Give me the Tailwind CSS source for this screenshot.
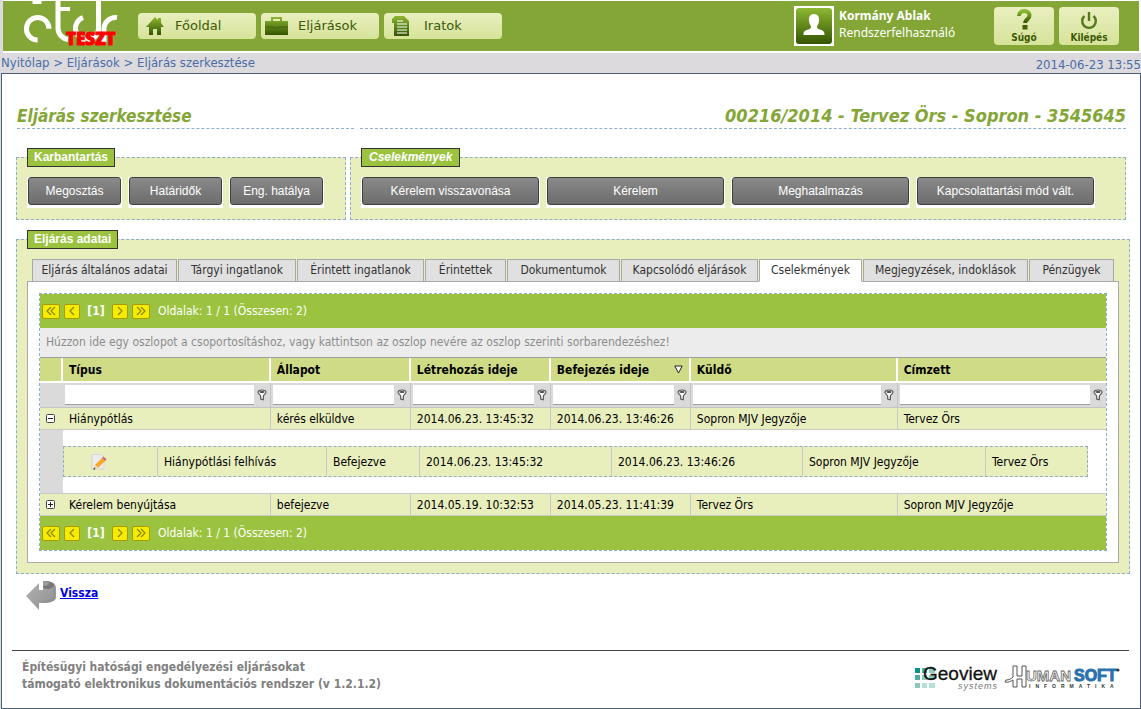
<!DOCTYPE html>
<html lang="hu">
<head>
<meta charset="utf-8">
<title>Eljárás szerkesztése</title>
<script src="https://cdn.jsdelivr.net/npm/@tailwindcss/browser@4"></script>
</head>
<body class="min-h-screen bg-[#dcdadd] font-['DejaVu_Sans_Condensed','Noto_Sans',sans-serif] text-xs text-black flex flex-col">
<svg class="absolute w-0 h-0" aria-hidden="true">
  <defs>
    <linearGradient id="leaf" x1="0" y1="0" x2="0" y2="1"><stop offset="0" stop-color="#8db832"/><stop offset="1" stop-color="#355403"/></linearGradient>
    <linearGradient id="steel" x1="0" y1="0" x2="1" y2="1"><stop offset="0" stop-color="#b4b4b4"/><stop offset="1" stop-color="#8c8c8c"/></linearGradient>
    <symbol id="funnel" viewBox="0 0 10 12"><path d="M1 3.200C1 2 2.800 1 5 1s4 1 4 2.200c0 1.600-2.500 2.300-2.700 4.300v3.300l-2.600-.8V7.500C3.500 5.500 1 4.800 1 3.200z" fill="#fff" stroke="#555" stroke-width="1.200"/><ellipse cx="5" cy="3" rx="2.600" ry="1.100" fill="#444"/></symbol>
    <symbol id="dleft" viewBox="0 0 10 10"><path d="M5 1L1 5l4 4M9 1L5 5l4 4" fill="none" stroke="#8c8500" stroke-width="1.200"/></symbol>
    <symbol id="left" viewBox="0 0 10 10"><path d="M7 1L3 5l4 4" fill="none" stroke="#8c8500" stroke-width="1.200"/></symbol>
    <symbol id="right" viewBox="0 0 10 10"><path d="M3 1l4 4-4 4" fill="none" stroke="#8c8500" stroke-width="1.200"/></symbol>
    <symbol id="dright" viewBox="0 0 10 10"><path d="M1 1l4 4-4 4M5 1l4 4-4 4" fill="none" stroke="#8c8500" stroke-width="1.200"/></symbol>
  </defs>
</svg>

<div class="pl-[3px] pt-px pr-0.5 bg-linear-to-r from-[#dcdadd] from-[3px] to-white to-[3px]">
  <header class="h-[50px] bg-[#83a636] flex items-start">
    <a href="#" class="block w-[135px] h-[50px]" aria-label="étdr TESZT">
      <svg class="w-[135px] h-[50px]" viewBox="3 1 135 50">
        <g fill="none" stroke="#fff" stroke-width="5">
          <path d="M37 0V4" stroke-width="9"/>
          <path d="M37.700 40A11.300 11.300 0 1 1 49 28.700"/>
          <path d="M58 0V28a11.500 11.500 0 0 0 10 11.500"/><path d="M58 9h12" stroke-width="4"/>
          <path d="M83 17.500a11.500 11.500 0 1 0 15.500 11V0"/>
          <path d="M104 42V29a11.500 11.500 0 0 1 13-11.500"/>
        </g>
        <text x="66" y="45" font-family="Open Sans, Noto Sans" font-weight="800" font-size="17" fill="#f00" stroke="#f00" stroke-width="1">TESZT</text>
      </svg>
    </a>
    <nav class="flex gap-[5px] pt-3 font-['DejaVu_Sans',sans-serif] text-[13px] text-[#3c5a08]">
      <a href="#" class="w-[118px] h-[26px] rounded-sm bg-linear-to-b from-[#e9efbf] to-[#d6e399] flex items-center pl-2 gap-[11px]">
        <svg class="w-[18px] h-[20px]" viewBox="0 0 18 20"><path d="M9 1l3 3V2h3v5l3 4h-3v8h-4v-6H7v6H3v-8H0z" fill="url(#leaf)"/></svg>Főoldal</a>
      <a href="#" class="w-[118px] h-[26px] rounded-sm bg-linear-to-b from-[#e9efbf] to-[#d6e399] flex items-center pl-1 gap-2.5">
        <svg class="w-[23px] h-[20px]" viewBox="0 0 23 20"><path d="M0 5h6V1h11v4h6v14H0zM8 3v2h7V3z" fill="url(#leaf)" fill-rule="evenodd"/><path d="M0 11h9v1h5v-1h9" fill="none" stroke="#3f6006"/></svg>Eljárások</a>
      <a href="#" class="w-[118px] h-[26px] rounded-sm bg-linear-to-b from-[#e9efbf] to-[#d6e399] flex items-center pl-2 gap-3.5">
        <svg class="w-[18px] h-[22px]" viewBox="0 0 18 22"><path d="M3 1h9l5 5v15H2V8H0V4z" fill="url(#leaf)"/><path d="M5 6h6M5 9h10M5 12h10M5 15h10M5 18h10" stroke="#fff" stroke-width="1.200"/></svg>Iratok</a>
    </nav>
    <div class="ml-auto flex pt-[5px] pr-5 text-white">
      <div class="w-10 h-10 bg-white p-0.5"><svg class="w-9 h-9" viewBox="0 0 36 36"><rect width="36" height="36" rx="3" fill="url(#leaf)"/><path d="M18 6c4 0 5.500 3 5 7-.3 3-1.500 4-2 5.500 0 2 1 2.500 3.500 3.300 3 1 4 1.700 4 5.200h-21c0-3.500 1-4.200 4-5.200 2.500-.8 3.500-1.300 3.500-3.300-.5-1.500-1.700-2.500-2-5.500-.5-4 1-7 5-7z" fill="#fff"/></svg></div>
      <div class="pl-[5px] w-40 text-xs leading-[17px] pt-px font-['Noto_Sans',sans-serif]"><div class="font-bold">Kormány Ablak</div><div>Rendszerfelhasználó</div></div>
      <div class="flex gap-[5px] pt-px text-[10px] font-bold text-[#3c5a08]">
        <button class="w-15 h-[38px] rounded-sm bg-linear-to-b from-[#e9efbf] to-[#d6e399] flex flex-col items-center justify-end gap-px pb-px leading-3">
          <svg class="w-5 h-[22px]" viewBox="0 0 20 22"><path d="M5 7c0-3 2-5 5.200-5s5.300 1.800 5.300 4.500c0 3.700-4.500 4-4.500 7.500" fill="none" stroke="url(#leaf)" stroke-width="4"/><path d="M8.500 16h5v4.500h-5z" fill="#3f6006"/></svg>Súgó</button>
        <button class="w-15 h-[38px] rounded-sm bg-linear-to-b from-[#e9efbf] to-[#d6e399] flex flex-col items-center justify-end gap-px pb-px leading-3">
          <svg class="w-5 h-[22px]" viewBox="0 0 20 22"><path d="M5.500 7a6.800 6.800 0 1 0 9 0M10 3v9" fill="none" stroke="#557a1d" stroke-width="2.400"/></svg>Kilépés</button>
      </div>
    </div>
  </header>
  <div class="h-0.5 bg-white"></div>
</div>

<div class="h-5 flex justify-between pl-px text-[13px] leading-[19px] text-[#4a6da7]">
  <nav class="whitespace-pre"><a href="#">Nyitólap</a> &gt; <a href="#">Eljárások</a> &gt; <a href="#">Eljárás szerkesztése</a></nav>
  <div class="leading-6">2014-06-23 13:55</div>
</div>

<main class="grow ml-px bg-white border border-[#4a6079] pl-3.5 flex flex-col">
  <div class="flex gap-1.5 pt-[30px] pl-px pr-3.5 leading-6 font-bold italic text-[#83a636]">
    <h1 class="w-[337px] border-b border-dashed border-[#8faecb] text-[17px] leading-6">Eljárás szerkesztése</h1>
    <h2 class="grow text-right border-b border-dashed border-[#8faecb] text-lg leading-6">00216/2014 - Tervez Örs - Sopron - 3545645</h2>
  </div>

  <div class="flex gap-1 pt-[19px] pr-3.5 text-[13px]">
    <fieldset class="w-[330px] h-18 border border-dashed border-[#8faecb] bg-[#e8eebc] pl-2.5 font-['Liberation_Sans',sans-serif]">
      <legend class="h-[19px] border border-[#333] bg-[#9cc340] px-1.5 leading-[17px] font-bold text-white text-xs">Karbantartás</legend>
      <div class="flex gap-1.5 pt-2.5 text-xs text-white">
        <div class="w-[95px] bg-white px-px pb-[3px]"><button class="w-full h-7 block rounded-[3px] border border-[#3f3f3f] bg-linear-to-b from-[#8a8a8a] to-[#6c6c6c]">Megosztás</button></div>
        <div class="w-[95px] bg-white px-px pb-[3px]"><button class="w-full h-7 block rounded-[3px] border border-[#3f3f3f] bg-linear-to-b from-[#8a8a8a] to-[#6c6c6c]">Határidők</button></div>
        <div class="w-[95px] bg-white px-px pb-[3px]"><button class="w-full h-7 block rounded-[3px] border border-[#3f3f3f] bg-linear-to-b from-[#8a8a8a] to-[#6c6c6c]">Eng. hatálya</button></div>
      </div>
    </fieldset>
    <fieldset class="grow h-18 border border-dashed border-[#8faecb] bg-[#e8eebc] pl-2.5 font-['Liberation_Sans',sans-serif]">
      <legend class="h-[19px] border border-[#333] bg-[#9cc340] px-[7px] leading-[17px] font-bold italic text-white text-xs">Cselekmények</legend>
      <div class="flex gap-1.5 pt-2.5 text-xs text-white">
        <div class="w-[179px] bg-white px-px pb-[3px]"><button class="w-full h-7 block rounded-[3px] border border-[#3f3f3f] bg-linear-to-b from-[#8a8a8a] to-[#6c6c6c]">Kérelem visszavonása</button></div>
        <div class="w-[179px] bg-white px-px pb-[3px]"><button class="w-full h-7 block rounded-[3px] border border-[#3f3f3f] bg-linear-to-b from-[#8a8a8a] to-[#6c6c6c]">Kérelem</button></div>
        <div class="w-[179px] bg-white px-px pb-[3px]"><button class="w-full h-7 block rounded-[3px] border border-[#3f3f3f] bg-linear-to-b from-[#8a8a8a] to-[#6c6c6c]">Meghatalmazás</button></div>
        <div class="w-[179px] bg-white px-px pb-[3px]"><button class="w-full h-7 block rounded-[3px] border border-[#3f3f3f] bg-linear-to-b from-[#8a8a8a] to-[#6c6c6c]">Kapcsolattartási mód vált.</button></div>
      </div>
    </fieldset>
  </div>

  <fieldset class="mt-2.5 mr-2.5 min-w-0 border border-dashed border-[#8faecb] bg-[#e8eebc] px-2.5 pb-2.5">
    <legend class="h-[19px] border border-[#333] bg-[#9cc340] px-1.5 leading-[17px] font-bold text-white text-xs font-['Liberation_Sans',sans-serif]">Eljárás adatai</legend>
    <div class="flex gap-px pt-2.5 pl-[5px] -mb-px relative text-[#333] leading-[21px] whitespace-nowrap" role="tablist">
      <button role="tab" class="w-[145px] h-[23px] border border-[#a9a9a9] bg-[#e0e0e0]">Eljárás általános adatai</button>
      <button role="tab" class="w-[118px] h-[23px] border border-[#a9a9a9] bg-[#e0e0e0]">Tárgyi ingatlanok</button>
      <button role="tab" class="w-[127px] h-[23px] border border-[#a9a9a9] bg-[#e0e0e0]">Érintett ingatlanok</button>
      <button role="tab" class="w-[81px] h-[23px] border border-[#a9a9a9] bg-[#e0e0e0]">Érintettek</button>
      <button role="tab" class="w-[113px] h-[23px] border border-[#a9a9a9] bg-[#e0e0e0]">Dokumentumok</button>
      <button role="tab" class="w-[137px] h-[23px] border border-[#a9a9a9] bg-[#e0e0e0]">Kapcsolódó eljárások</button>
      <button role="tab" aria-selected="true" class="w-[103px] h-[23px] border border-[#a9a9a9] border-b-white bg-white">Cselekmények</button>
      <button role="tab" class="w-[165px] h-[23px] border border-[#a9a9a9] bg-[#e0e0e0]">Megjegyzések, indoklások</button>
      <button role="tab" class="w-[85px] h-[23px] border border-[#a9a9a9] bg-[#e0e0e0]">Pénzügyek</button>
    </div>
    <div class="border border-[#a9a9a9] bg-white p-[11px]">
      <div class="border border-dashed border-[#8faecb]">
        <div class="h-[34px] bg-[#9cc340] flex items-center pl-0.5 text-white">
          <button class="w-[18px] h-[15px] rounded-xs border border-[#a39b00] bg-[#f5ec00] flex items-center justify-center" aria-label="Első"><svg class="w-2.5 h-2.5"><use href="#dleft"/></svg></button>
          <button class="ml-1 w-4 h-[15px] rounded-xs border border-[#a39b00] bg-[#f5ec00] flex items-center justify-center" aria-label="Előző"><svg class="w-2.5 h-2.5"><use href="#left"/></svg></button>
          <b class="w-8 text-center">[1]</b>
          <button class="w-4 h-[15px] rounded-xs border border-[#a39b00] bg-[#f5ec00] flex items-center justify-center" aria-label="Következő"><svg class="w-2.5 h-2.5"><use href="#right"/></svg></button>
          <button class="ml-1 w-[18px] h-[15px] rounded-xs border border-[#a39b00] bg-[#f5ec00] flex items-center justify-center" aria-label="Utolsó"><svg class="w-2.5 h-2.5"><use href="#dright"/></svg></button>
          <span class="ml-2">Oldalak: 1 / 1 (Összesen: 2)</span>
        </div>
        <div class="h-[30px] bg-[#ececec] border-b border-[#9f9f9f] pl-1.5 leading-[29px] text-[#8c8c8c]">Húzzon ide egy oszlopot a csoportosításhoz, vagy kattintson az oszlop nevére az oszlop szerinti sorbarendezéshez!</div>
        <table class="w-full table-fixed border-separate border-spacing-0 text-left leading-5">
          <colgroup><col class="w-[23px]"><col class="w-[19.5%]"><col class="w-[140px]"><col class="w-[140px]"><col class="w-[140px]"><col class="w-[19.4%]"><col></colgroup>
          <thead>
            <tr class="h-[25px] bg-[#cfdc85]">
              <th class="p-0 border-r-2 border-b-2 border-white"></th>
              <th class="py-0 px-1.5 border-r-2 border-b-2 border-white">Típus</th>
              <th class="py-0 px-1.5 border-r-2 border-b-2 border-white">Állapot</th>
              <th class="py-0 px-1.5 border-r-2 border-b-2 border-white">Létrehozás ideje</th>
              <th class="py-0 px-1.5 border-r-2 border-b-2 border-white"><span class="flex items-center justify-between">Befejezés ideje<svg class="w-[9px] h-[9px]" viewBox="0 0 9 9"><path d="M.8 1h7.400L4.500 8z" fill="#fff" stroke="#222"/></svg></span></th>
              <th class="py-0 px-1.5 border-r-2 border-b-2 border-white">Küldő</th>
              <th class="py-0 px-1.5 border-b-2 border-white">Címzett</th>
            </tr>
            <tr class="h-[25px] bg-[#dadada]">
              <td class="p-0 border-b border-[#c4c4c4]"></td>
              <td class="p-0 border-r border-b border-[#c4c4c4]"><div class="flex items-center gap-[3px] pl-0.5 pr-[3px]"><input aria-label="Típus szűrő" class="min-w-0 grow h-5 bg-white border-b border-[#9f9f9f]"><svg class="w-2.5 h-3 shrink-0"><use href="#funnel"/></svg></div></td>
              <td class="p-0 border-r border-b border-[#c4c4c4]"><div class="flex items-center gap-[3px] pl-0.5 pr-[3px]"><input aria-label="Állapot szűrő" class="min-w-0 grow h-5 bg-white border-b border-[#9f9f9f]"><svg class="w-2.5 h-3 shrink-0"><use href="#funnel"/></svg></div></td>
              <td class="p-0 border-r border-b border-[#c4c4c4]"><div class="flex items-center gap-[3px] pl-0.5 pr-[3px]"><input aria-label="Létrehozás ideje szűrő" class="min-w-0 grow h-5 bg-white border-b border-[#9f9f9f]"><svg class="w-2.5 h-3 shrink-0"><use href="#funnel"/></svg></div></td>
              <td class="p-0 border-r border-b border-[#c4c4c4]"><div class="flex items-center gap-[3px] pl-0.5 pr-[3px]"><input aria-label="Befejezés ideje szűrő" class="min-w-0 grow h-5 bg-white border-b border-[#9f9f9f]"><svg class="w-2.5 h-3 shrink-0"><use href="#funnel"/></svg></div></td>
              <td class="p-0 border-r border-b border-[#c4c4c4]"><div class="flex items-center gap-[3px] pl-0.5 pr-[3px]"><input aria-label="Küldő szűrő" class="min-w-0 grow h-5 bg-white border-b border-[#9f9f9f]"><svg class="w-2.5 h-3 shrink-0"><use href="#funnel"/></svg></div></td>
              <td class="p-0 border-b border-[#c4c4c4]"><div class="flex items-center gap-[3px] pl-0.5 pr-[3px]"><input aria-label="Címzett szűrő" class="min-w-0 grow h-5 bg-white border-b border-[#9f9f9f]"><svg class="w-2.5 h-3 shrink-0"><use href="#funnel"/></svg></div></td>
            </tr>
          </thead>
          <tbody>
            <tr class="h-[22px] bg-[#e8eebc]">
              <td class="p-0 border-b border-[#c9c9c9]"><button class="ml-1.5 block" aria-label="Bezárás"><svg class="w-[9px] h-[9px]" viewBox="0 0 9 9"><rect x=".5" y=".5" width="8" height="8" rx="1" fill="#fff" stroke="#444"/><path d="M2 4.500h5" stroke="#222"/></svg></button></td>
              <td class="py-0 px-1.5 border-r border-b border-[#c9c9c9]">Hiánypótlás</td>
              <td class="py-0 px-1.5 border-r border-b border-[#c9c9c9]">kérés elküldve</td>
              <td class="py-0 px-1.5 border-r border-b border-[#c9c9c9]">2014.06.23. 13:45:32</td>
              <td class="py-0 px-1.5 border-r border-b border-[#c9c9c9]">2014.06.23. 13:46:26</td>
              <td class="py-0 px-1.5 border-r border-b border-[#c9c9c9]">Sopron MJV Jegyzője</td>
              <td class="py-0 px-1.5 border-b border-[#c9c9c9]">Tervez Örs</td>
            </tr>
            <tr>
              <td class="p-0 bg-[#dadada] border-b border-b-[#c9c9c9]"></td>
              <td colspan="6" class="py-4 pl-0 pr-[18px] border-b border-[#c9c9c9]">
                <table class="w-full table-fixed border-separate border-spacing-0 border border-dashed border-[#8faecb] bg-[#e8eebc]">
                  <colgroup><col class="w-[94px]"><col class="w-[169px]"><col class="w-[93px]"><col class="w-[192px]"><col class="w-[191px]"><col class="w-[183px]"><col></colgroup>
                  <tr class="h-[29px]">
                    <td class="p-0 border-r border-[#c9c9c9]"><button class="block ml-[27px]" aria-label="Szerkesztés"><svg class="w-4 h-4" viewBox="0 0 16 16"><path d="M1 .5h9l3 3V15H1z" fill="#ececec" stroke="#d5d5d5"/><path d="M4 11l7-7 3 3-7 7z" fill="#f7a928"/><path d="M11 4l1.500-1.500 3 3L14 7z" fill="#d9645c"/><path d="M4 11l3 3-4.500 1.500z" fill="#f3d2a0"/><path d="M3 13.500l1.500 1.500-2.200.8z" fill="#222"/></svg></button></td>
                    <td class="py-0 px-1.5 border-r border-[#c9c9c9]">Hiánypótlási felhívás</td>
                    <td class="py-0 px-1.5 border-r border-[#c9c9c9]">Befejezve</td>
                    <td class="py-0 px-1.5 border-r border-[#c9c9c9]">2014.06.23. 13:45:32</td>
                    <td class="py-0 px-1.5 border-r border-[#c9c9c9]">2014.06.23. 13:46:26</td>
                    <td class="py-0 px-1.5 border-r border-[#c9c9c9]">Sopron MJV Jegyzője</td>
                    <td class="py-0 px-1.5">Tervez Örs</td>
                  </tr>
                </table>
              </td>
            </tr>
            <tr class="h-[22px] bg-[#e8eebc]">
              <td class="p-0 border-b border-[#c9c9c9]"><button class="ml-1.5 block" aria-label="Kinyitás"><svg class="w-[9px] h-[9px]" viewBox="0 0 9 9"><rect x=".5" y=".5" width="8" height="8" rx="1" fill="#fff" stroke="#444"/><path d="M2 4.500h5M4.500 2v5" stroke="#222"/></svg></button></td>
              <td class="py-0 px-1.5 border-r border-b border-[#c9c9c9]">Kérelem benyújtása</td>
              <td class="py-0 px-1.5 border-r border-b border-[#c9c9c9]">befejezve</td>
              <td class="py-0 px-1.5 border-r border-b border-[#c9c9c9]">2014.05.19. 10:32:53</td>
              <td class="py-0 px-1.5 border-r border-b border-[#c9c9c9]">2014.05.23. 11:41:39</td>
              <td class="py-0 px-1.5 border-r border-b border-[#c9c9c9]">Tervez Örs</td>
              <td class="py-0 px-1.5 border-b border-[#c9c9c9]">Sopron MJV Jegyzője</td>
            </tr>
          </tbody>
        </table>
        <div class="h-[34px] bg-[#9cc340] flex items-center pl-0.5 text-white">
          <button class="w-[18px] h-[15px] rounded-xs border border-[#a39b00] bg-[#f5ec00] flex items-center justify-center" aria-label="Első"><svg class="w-2.5 h-2.5"><use href="#dleft"/></svg></button>
          <button class="ml-1 w-4 h-[15px] rounded-xs border border-[#a39b00] bg-[#f5ec00] flex items-center justify-center" aria-label="Előző"><svg class="w-2.5 h-2.5"><use href="#left"/></svg></button>
          <b class="w-8 text-center">[1]</b>
          <button class="w-4 h-[15px] rounded-xs border border-[#a39b00] bg-[#f5ec00] flex items-center justify-center" aria-label="Következő"><svg class="w-2.5 h-2.5"><use href="#right"/></svg></button>
          <button class="ml-1 w-[18px] h-[15px] rounded-xs border border-[#a39b00] bg-[#f5ec00] flex items-center justify-center" aria-label="Utolsó"><svg class="w-2.5 h-2.5"><use href="#dright"/></svg></button>
          <span class="ml-2">Oldalak: 1 / 1 (Összesen: 2)</span>
        </div>
      </div>
    </div>
  </fieldset>

  <a href="#" class="mt-1.5 ml-2.5 self-start flex gap-1 font-bold text-xs leading-[26px] text-[#0000e6] underline">
    <svg class="w-[30px] h-[31px]" viewBox="0 0 30 31"><path d="M0 16L13 3v7h4V1c8 0 13 2 13 7v9c0 4-5 6-13 6h-4v7z" fill="url(#steel)"/><path d="M17 1c8 0 11 2 11 4s-3 4-7 4l-4-1z" fill="#777"/><path d="M17 1c4 0 6 1 6 2.500S20 6 17 6z" fill="#9c9c9c"/><path d="M28 7v10c-1 3-5 4.500-11 4.500" fill="none" stroke="#8b8b8b"/></svg>
    Vissza</a>

  <footer class="mt-auto -ml-1 mr-[11px] border-t border-[#444] flex justify-between items-start pt-2 pb-[15px] pl-2.5 pr-[9px] font-bold leading-[17px] text-[#808080]">
    <p>Építésügyi hatósági engedélyezési eljárásokat<br>támogató elektronikus dokumentációs rendszer (v 1.2.1.2)</p>
    <div class="flex gap-1 pt-1">
      <svg class="w-[86px] h-[28px]" viewBox="0 0 86 28" role="img" aria-label="Geoview systems">
        <path d="M1 5h5v5H1z" fill="#0e9580"/><path d="M8 5h5v5H8zM1 12h5v5H1z" fill="#4fae9d"/><path d="M15 5h6v5h-6zM8 12h5v5H8zM15 12h6v5h-6zM1 20h5v5H1z" fill="#8ccabd"/><path d="M8 20h5v5H8zM15 20h6v5h-6z" fill="#b9ded6"/>
        <text x="9" y="17" font-family="Liberation Sans" font-size="19" font-weight="400" fill="#111" stroke="#111" stroke-width=".3">Geoview</text>
        <text x="44" y="26" font-family="Liberation Sans" font-size="9" font-weight="400" font-style="italic" letter-spacing="1" fill="#777">systems</text>
      </svg>
      <svg class="w-[116px] h-[28px]" viewBox="0 0 116 28" role="img" aria-label="HumanSoft Informatika">
        <path d="M9 3h4v10h5V3h4v21h-4v-8h-5v8H9v-7c-2 1-5 3-8 2l1-2c3 0 5-1 7-3z" fill="#fff" stroke="#555"/>
        <text x="22" y="18" font-family="Liberation Sans" font-size="15" font-weight="700" fill="#fff" stroke="#666" stroke-width=".8">UMAN</text>
        <text x="70" y="18" font-family="Liberation Sans" font-size="16" font-weight="700" fill="#2a71b0" stroke="#2a71b0">SOFT</text>
        <circle cx="114" cy="7" r="1.500" fill="#333"/>
        <text x="25" y="25" font-family="Liberation Sans" font-size="5" font-weight="700" fill="#333" letter-spacing="5">INFORMATIKA</text>
      </svg>
    </div>
  </footer>
</main>
</body>
</html>
